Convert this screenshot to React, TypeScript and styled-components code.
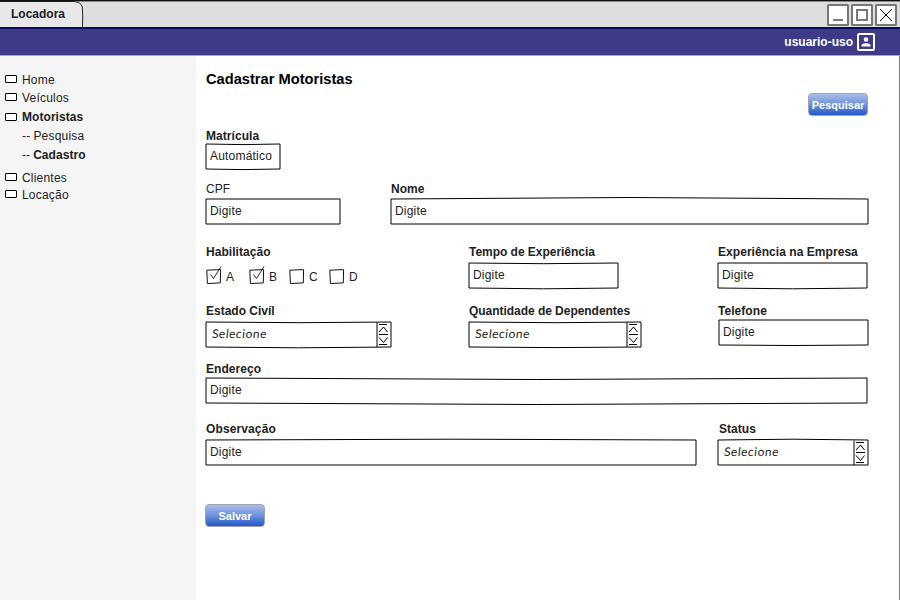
import React from "react";
import styled, { createGlobalStyle } from "styled-components";

const Global = createGlobalStyle`
  *, *::before, *::after { box-sizing: border-box; }
  body { margin: 0; background: #fff; overflow: hidden; }
  svg { display: block; overflow: visible; }
`;

const Window = styled.div`
  width: 900px;
  height: 600px;
  display: flex;
  flex-direction: column;
  font-family: "Liberation Sans", Arial, sans-serif;
  font-size: 12px;
  color: #222;
  background: #fff;
`;

const TitleBar = styled.header`
  height: 27px;
  flex: none;
  display: flex;
  justify-content: space-between;
  background: #dedede;
  border-top: 1px solid #111;
  box-shadow: inset 0 1px 0 #8a8a8a;
`;

const Tab = styled.div`
  width: 84px;
  height: 26px;
  display: grid;
  > * { grid-area: 1 / 1; }
`;

const TabText = styled.span`
  font-weight: bold;
  line-height: 14px;
  padding: 6px 0 0 11px;
`;

const WindowControls = styled.div`
  display: flex;
  gap: 2px;
  padding: 3px 3px 0 0;
`;

const UserBar = styled.div`
  height: 29px;
  flex: none;
  display: flex;
  align-items: center;
  justify-content: flex-end;
  gap: 4px;
  padding: 0 25px 1px 0;
  background: #3d3b87;
  border-top: 2px solid #0b0a5c;
  border-bottom: 1px solid #a9a8c4;
  color: #fff;
  font-weight: bold;
`;

const Body = styled.div`
  flex: 1;
  display: flex;
  border-right: 1px solid #808080;
`;

const Sidebar = styled.nav`
  width: 196px;
  flex: none;
  background: #f5f5f5;
  padding: 16px 0 0 5px;
`;

const MenuItem = styled.div<{ $h: number; $active?: boolean; $sub?: boolean }>`
  height: ${(p) => p.$h}px;
  display: flex;
  gap: 5px;
  padding-left: ${(p) => (p.$sub ? 17 : 0)}px;
  line-height: 16px;
  letter-spacing: ${(p) => (p.$active ? 0.06 : 0.2)}px;
  font-weight: ${(p) => (p.$active ? "bold" : "normal")};
`;

const Marker = styled.i<{ $low?: boolean }>`
  width: 12px;
  height: 8px;
  margin-top: ${(p) => (p.$low ? 4 : 3)}px;
  border: 1px solid #000;
  border-radius: 1px;
  background: #fff;
`;

const Dashes = styled.span`
  font-weight: normal;
  margin-right: -2px;
`;

const Main = styled.main`
  flex: 1;
  padding: 14px 0 0 10px;
`;

const Heading = styled.h1`
  margin: 0;
  height: 23px;
  font-size: 14.67px;
  line-height: 18px;
  color: #000;
`;

const Actions = styled.div`
  display: flex;
  justify-content: flex-end;
  height: 35px;
  padding-right: 31px;
`;

const Button = styled.button`
  width: 60px;
  height: 23px;
  padding: 0;
  border: 1px solid #a3a3ad;
  border-radius: 4px;
  background: linear-gradient(#a9bde8, #6f92dc 50%, #2257c8);
  color: #fff;
  font: bold 11px "Liberation Sans", Arial, sans-serif;
`;

const SaveButton = styled(Button)`
  grid-column: 1;
  grid-row: 7;
  margin-left: -1px;
`;

const Form = styled.form`
  display: grid;
  grid-template-columns: 185px 78px 249px 1fr;
  grid-template-rows: 53px 63px 59px 58px 60px 83px 23px;
`;

const FieldBox = styled.div<{ $col: number; $row: number; $gap: number; $span?: number; $shift?: number }>`
  grid-column: ${(p) => p.$col} / span ${(p) => p.$span ?? 1};
  grid-row: ${(p) => p.$row};
  display: flex;
  flex-direction: column;
  gap: ${(p) => p.$gap}px;
  padding-left: ${(p) => p.$shift ?? 0}px;
`;

const Label = styled.label<{ $plain?: boolean; $shift?: number; $track?: number }>`
  height: 16px;
  line-height: 16px;
  white-space: nowrap;
  letter-spacing: ${(p) => p.$track ?? 0.05}px;
  text-indent: ${(p) => p.$shift ?? 0}px;
  font-weight: ${(p) => (p.$plain ? "normal" : "bold")};
`;

const Control = styled.div<{ $w: number }>`
  width: ${(p) => p.$w}px;
  height: 25px;
  display: grid;
  > * { grid-area: 1 / 1; }
`;

const Value = styled.span`
  padding-left: 4px;
  line-height: 24px;
  letter-spacing: 0.2px;
`;

const HandValue = styled.span`
  justify-self: start;
  padding-left: 6px;
  font: 12px/24px Lato, sans-serif;
  letter-spacing: 0.5px;
  transform: skewX(-6deg);
`;

const Checks = styled.div`
  display: flex;
  padding-top: 7px;
`;

const Check = styled.div<{ $w: number }>`
  width: ${(p) => p.$w}px;
  display: flex;
  gap: 5px;
  line-height: 17px;
`;

type FieldProps = {
  label: string;
  text: string;
  col: number;
  row: number;
  w: number;
  gap: number;
  top?: number;
  bottom?: number;
  span?: number;
  shift?: number;
  labelShift?: number;
  track?: number;
  select?: boolean;
  plain?: boolean;
};

function Frame({ w, top = 0, bottom = 0, select }: { w: number; top?: number; bottom?: number; select?: boolean }) {
  const s = w - 14;
  return (
    <svg width={w} height={25} fill="none" stroke="#000">
      <path d={`M0 0Q${w / 2} ${top * 2} ${w} 0V25Q${w / 2} ${25 + bottom * 2} 0 25Z`} />
      {select && (
        <path d={`M${s} .5V25M${s + 2} 2.5h8M${s + 2} 10l4.5-5 4 5M${s + 2} 12.5h9M${s + 2} 15.5l4.5 5 4-5M${s + 2} 22.5h8`} />
      )}
    </svg>
  );
}

function Field(p: FieldProps) {
  return (
    <FieldBox $col={p.col} $row={p.row} $gap={p.gap} $span={p.span} $shift={p.shift}>
      <Label $plain={p.plain} $shift={p.labelShift} $track={p.track}>{p.label}</Label>
      <Control $w={p.w}>
        <Frame w={p.w} top={p.top} bottom={p.bottom} select={p.select} />
        {p.select ? <HandValue>{p.text}</HandValue> : <Value>{p.text}</Value>}
      </Control>
    </FieldBox>
  );
}

function Option({ name, checked, w }: { name: string; checked?: boolean; w: number }) {
  return (
    <Check $w={w}>
      <svg width="15" height="15" fill="none" stroke="#111">
        <path d="M.8 1.2L14.6 .6L14.3 13.9L1.4 14.5Z" />
        {checked && <path d="M4.5 5.5L7.5 9.5L15-2.5" strokeWidth=".9" />}
      </svg>
      {name}
    </Check>
  );
}

function ControlIcon({ children }: { children: React.ReactNode }) {
  return (
    <svg width="22" height="22" fill="#fff" stroke="#777" strokeWidth="2">
      <rect x="1" y="1" width="20" height="20" rx=".5" />
      {children}
    </svg>
  );
}

export default function App() {
  return (
    <Window>
      <Global />
      <TitleBar>
        <Tab>
          <svg width="84" height="26" fill="#e8e8e8" stroke="#222">
            <path stroke="none" d="M0 0H75Q82.5 1 82.5 8V26H0Z" />
            <path fill="none" d="M0 .5H74Q81 1 82.3 6Q83 14 82.5 26" />
          </svg>
          <TabText>Locadora</TabText>
        </Tab>
        <WindowControls>
          <ControlIcon><path d="M6 16h10" /></ControlIcon>
          <ControlIcon><rect x="6" y="6" width="10" height="10" /></ControlIcon>
          <ControlIcon><path d="M5 5L17 17M17 5L5 17" stroke="#000" strokeWidth="1" /></ControlIcon>
        </WindowControls>
      </TitleBar>
      <UserBar>
        usuario-uso
        <svg width="18" height="18" fill="none" stroke="#fff" strokeWidth="2">
          <rect x="1" y="1" width="16" height="16" rx="1" />
          <circle cx="9" cy="6.5" r="2.3" fill="#fff" stroke="none" />
          <path d="M4.5 13.5v-1c0-3 9-3 9 0v1z" fill="#fff" stroke="none" />
        </svg>
      </UserBar>
      <Body>
        <Sidebar>
          <MenuItem $h={18}><Marker />Home</MenuItem>
          <MenuItem $h={19}><Marker />Veículos</MenuItem>
          <MenuItem $h={19} $active><Marker $low />Motoristas</MenuItem>
          <MenuItem $h={19} $sub><Dashes>--</Dashes>Pesquisa</MenuItem>
          <MenuItem $h={23} $sub $active><Dashes>--</Dashes>Cadastro</MenuItem>
          <MenuItem $h={17}><Marker />Clientes</MenuItem>
          <MenuItem $h={18}><Marker />Locação</MenuItem>
        </Sidebar>
        <Main>
          <Heading>Cadastrar Motoristas</Heading>
          <Actions><Button>Pesquisar</Button></Actions>
          <Form>
            <Field row={1} col={1} w={74} gap={0} top={0.6} bottom={0.6} label="Matrícula" text="Automático" />
            <Field row={2} col={1} w={134} gap={2} plain label="CPF" text="Digite" />
            <Field row={2} col={2} span={3} w={477} gap={2} top={-1.5} label="Nome" text="Digite" />
            <FieldBox $row={3} $col={1} $gap={2}>
              <Label>Habilitação</Label>
              <Checks>
                <Option w={43} name="A" checked />
                <Option w={40} name="B" checked />
                <Option w={40} name="C" />
                <Option w={40} name="D" />
              </Checks>
            </FieldBox>
            <Field row={3} col={3} w={149} gap={3} top={0.7} bottom={0.8} track={-0.03} label="Tempo de Experiência" text="Digite" />
            <Field row={3} col={4} w={149} gap={3} bottom={0.8} label="Experiência na Empresa" text="Digite" />
            <Field row={4} col={1} span={2} w={185} gap={3} top={0.7} bottom={0.8} track={0} select label="Estado Civíl" text="Selecione" />
            <Field row={4} col={3} w={172} gap={3} top={0.7} bottom={0.6} track={-0.04} select label="Quantidade de Dependentes" text="Selecione" />
            <Field row={4} col={4} w={149} gap={1} shift={1} labelShift={-1} bottom={0.5} label="Telefone" text="Digite" />
            <Field row={5} col={1} span={4} w={661} gap={1} top={1.5} bottom={1.5} label="Endereço" text="Digite" />
            <Field row={6} col={1} span={3} w={490} gap={3} top={-0.8} track={0.12} label="Observação" text="Digite" />
            <Field row={6} col={4} w={150} gap={3} top={-0.8} labelShift={1} select label="Status" text="Selecione" />
            <SaveButton type="button">Salvar</SaveButton>
          </Form>
        </Main>
      </Body>
    </Window>
  );
}
